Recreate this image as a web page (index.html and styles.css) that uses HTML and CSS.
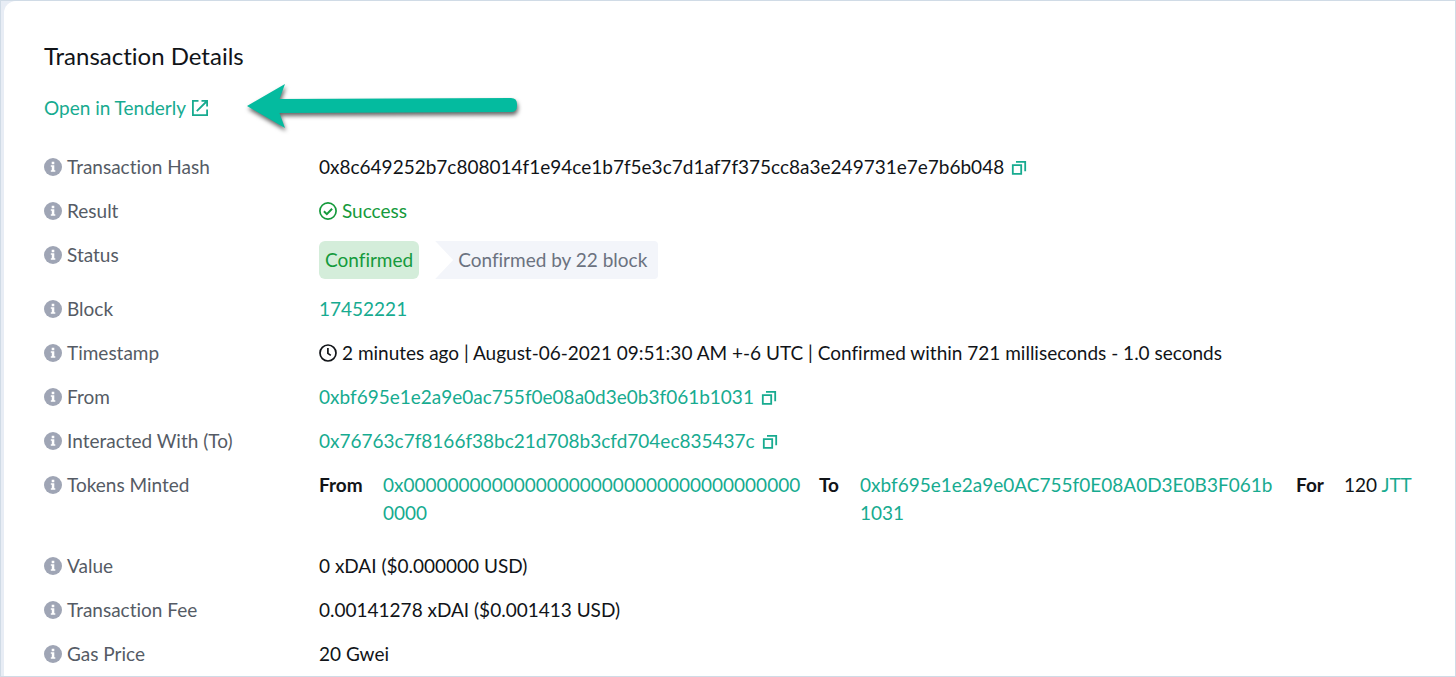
FILE: index.html
```
<!DOCTYPE html>
<html lang="en">
<head>
    <meta charset="UTF-8">
    <title>Transaction Details</title>
    <link rel="stylesheet" href="styles.css">
</head>
<body>
    <svg class="sprite" width="0" height="0">
        <symbol id="info" viewBox="0 0 18 18">
            <circle cx="9" cy="9" r="9" fill="#9fa5b5"/>
            <path d="M7.7 3.8h2.6v2.4H7.7zM6.8 7.2h3.5v5h1v1.6H6.8v-1.6h1V8.8h-1z" fill="#fff"/>
        </symbol>
        <symbol id="copy" viewBox="0 0 16 16">
            <path d="M1.8 5.2h8.4v8.6H1.8z M5 1.8h9.2v9.4" fill="none" stroke="currentColor" stroke-width="1.8"/>
        </symbol>
    </svg>

    <main class="page">
        <section class="card">
            <h1 class="card-title">Transaction Details</h1>
            <div class="tools">
                <a class="tenderly" href="#">Open in Tenderly
                    <svg class="icon" viewBox="0 0 18 18" fill="none" stroke="currentColor" stroke-width="1.8">
                        <path d="M7.5 1.9H1.9v14.2h14.2v-5.6M10.5 1.9h5.6v5.6M16 2L5.8 12.2"/>
                    </svg>
                </a>
                <svg class="arrow" viewBox="0 1 280 54">
                    <path d="M4 26L42 4l-5.500 15L268 18q6 0 6 6v2q0 6-6 6L36.500 33 42 48z" fill="#04bb9f"/>
                </svg>
            </div>

            <dl class="details">
                <div class="row">
                    <dt><svg class="icon"><use href="#info"/></svg>Transaction Hash</dt>
                    <dd>0x8c649252b7c808014f1e94ce1b7f5e3c7d1af7f375cc8a3e249731e7e7b6b048
                        <button class="copy" aria-label="Copy transaction hash"><svg><use href="#copy"/></svg></button></dd>
                </div>
                <div class="row">
                    <dt><svg class="icon"><use href="#info"/></svg>Result</dt>
                    <dd class="success">
                        <svg class="icon lead" viewBox="0 0 18 18" fill="none" stroke="currentColor">
                            <circle cx="9" cy="9" r="8.100" stroke-width="1.700"/>
                            <path d="M4.900 9.300l2.900 2.800 5.300-5.400" stroke-width="2"/>
                        </svg>Success</dd>
                </div>
                <div class="row">
                    <dt><svg class="icon"><use href="#info"/></svg>Status</dt>
                    <dd class="status">
                        <span class="badge">Confirmed</span>
                        <span class="blocks">Confirmed by 22 block</span>
                    </dd>
                </div>
                <div class="row">
                    <dt><svg class="icon"><use href="#info"/></svg>Block</dt>
                    <dd><a href="#">17452221</a></dd>
                </div>
                <div class="row">
                    <dt><svg class="icon"><use href="#info"/></svg>Timestamp</dt>
                    <dd>
                        <svg class="icon lead" viewBox="0 0 18 18" fill="none" stroke="currentColor" stroke-width="1.700">
                            <circle cx="9" cy="9" r="8"/>
                            <path d="M8.900 4v5.400l2.900 2"/>
                        </svg>2 minutes ago | August-06-2021 09:51:30 AM +-6 UTC | Confirmed within 721 milliseconds - 1.0 seconds</dd>
                </div>
                <div class="row">
                    <dt><svg class="icon"><use href="#info"/></svg>From</dt>
                    <dd><a href="#">0xbf695e1e2a9e0ac755f0e08a0d3e0b3f061b1031</a>
                        <button class="copy" aria-label="Copy from address"><svg><use href="#copy"/></svg></button></dd>
                </div>
                <div class="row">
                    <dt><svg class="icon"><use href="#info"/></svg>Interacted With (To)</dt>
                    <dd><a href="#">0x76763c7f8166f38bc21d708b3cfd704ec835437c</a>
                        <button class="copy" aria-label="Copy to address"><svg><use href="#copy"/></svg></button></dd>
                </div>
                <div class="row tokens">
                    <dt><svg class="icon"><use href="#info"/></svg>Tokens Minted</dt>
                    <dd class="transfer">
                        <b>From</b>
                        <a href="#">0x0000000000000000000000000000000000000000</a>
                        <b>To</b>
                        <a href="#">0xbf695e1e2a9e0AC755f0E08A0D3E0B3F061b1031</a>
                        <b>For</b>
                        <span>120 <a href="#">JTT</a></span>
                    </dd>
                </div>
                <div class="row">
                    <dt><svg class="icon"><use href="#info"/></svg>Value</dt>
                    <dd>0 xDAI ($0.000000 USD)</dd>
                </div>
                <div class="row">
                    <dt><svg class="icon"><use href="#info"/></svg>Transaction Fee</dt>
                    <dd>0.00141278 xDAI ($0.001413 USD)</dd>
                </div>
                <div class="row">
                    <dt><svg class="icon"><use href="#info"/></svg>Gas Price</dt>
                    <dd>20 Gwei</dd>
                </div>
            </dl>
        </section>
    </main>
</body>
</html>
```
FILE: styles.css
```
* {
    box-sizing: border-box;
}
body {
    margin: 0;
    font-family: Lato, "Open Sans", sans-serif;
    font-size: 19px;
    line-height: 28px;
    font-variant-ligatures: none;
    color: #111418;
    background-color: #e8edf5;
}
a {
    color: #17ab90;
    text-decoration: none;
}
.sprite {
    position: absolute;
}
.page {
    min-height: 100vh;
    padding-left: 3px;
    border: 1px solid #d0dbe6;
    display: flex;
}
.card {
    flex: 1;
    min-width: 0;
    padding: 39px 43px 8px 40px;
    background-color: #fff;
    border-top-left-radius: 12px;
}
.card-title {
    margin: 0;
    font-size: 24px;
    line-height: 32px;
    font-weight: 400;
}
.tools {
    display: flex;
    align-items: center;
    gap: 34px;
    height: 54px;
    margin: 9px 0 18px;
}
.tenderly {
    display: flex;
    align-items: center;
    gap: 5px;
}
.icon {
    width: 18px;
    height: 18px;
    flex: none;
}
.arrow {
    width: 280px;
    height: 54px;
    filter: drop-shadow(1px 3px 2px rgba(0, 0, 0, 0.6));
}
.details {
    margin: 0;
    display: flex;
    flex-direction: column;
    gap: 16px;
}
.row {
    display: grid;
    grid-template-columns: 275px minmax(0, 1fr);
}
.row dt {
    display: flex;
    align-items: center;
    align-self: start;
    gap: 5px;
    color: #555b65;
}
.row dd {
    margin: 0;
}
.lead {
    margin-right: 5px;
    vertical-align: -2px;
}
.success {
    color: #159a3c;
}
.copy {
    width: 16px;
    height: 16px;
    margin-left: 2px;
    padding: 0;
    border: none;
    background: none;
    color: #17ab90;
    vertical-align: -2px;
    cursor: pointer;
}
.copy svg {
    display: block;
    width: 16px;
    height: 16px;
}
.status {
    display: flex;
    gap: 16px;
    line-height: 38px;
}
.badge {
    padding: 0 6px;
    border-radius: 6px;
    color: #159a3c;
    background-color: #d4edda;
}
.blocks {
    padding: 0 11px 0 23px;
    border-radius: 0 4px 4px 0;
    color: #6b7280;
    background-color: #f3f5fa;
    clip-path: polygon(0 0, 100% 0, 100% 100%, 0 100%, 18px 50%);
}
.transfer {
    display: grid;
    grid-template-columns: 64px 1fr 41px 1fr 48px 68px;
}
.transfer > a {
    padding-right: 16px;
    word-break: break-all;
}
.tokens {
    margin-bottom: 9px;
}
```
